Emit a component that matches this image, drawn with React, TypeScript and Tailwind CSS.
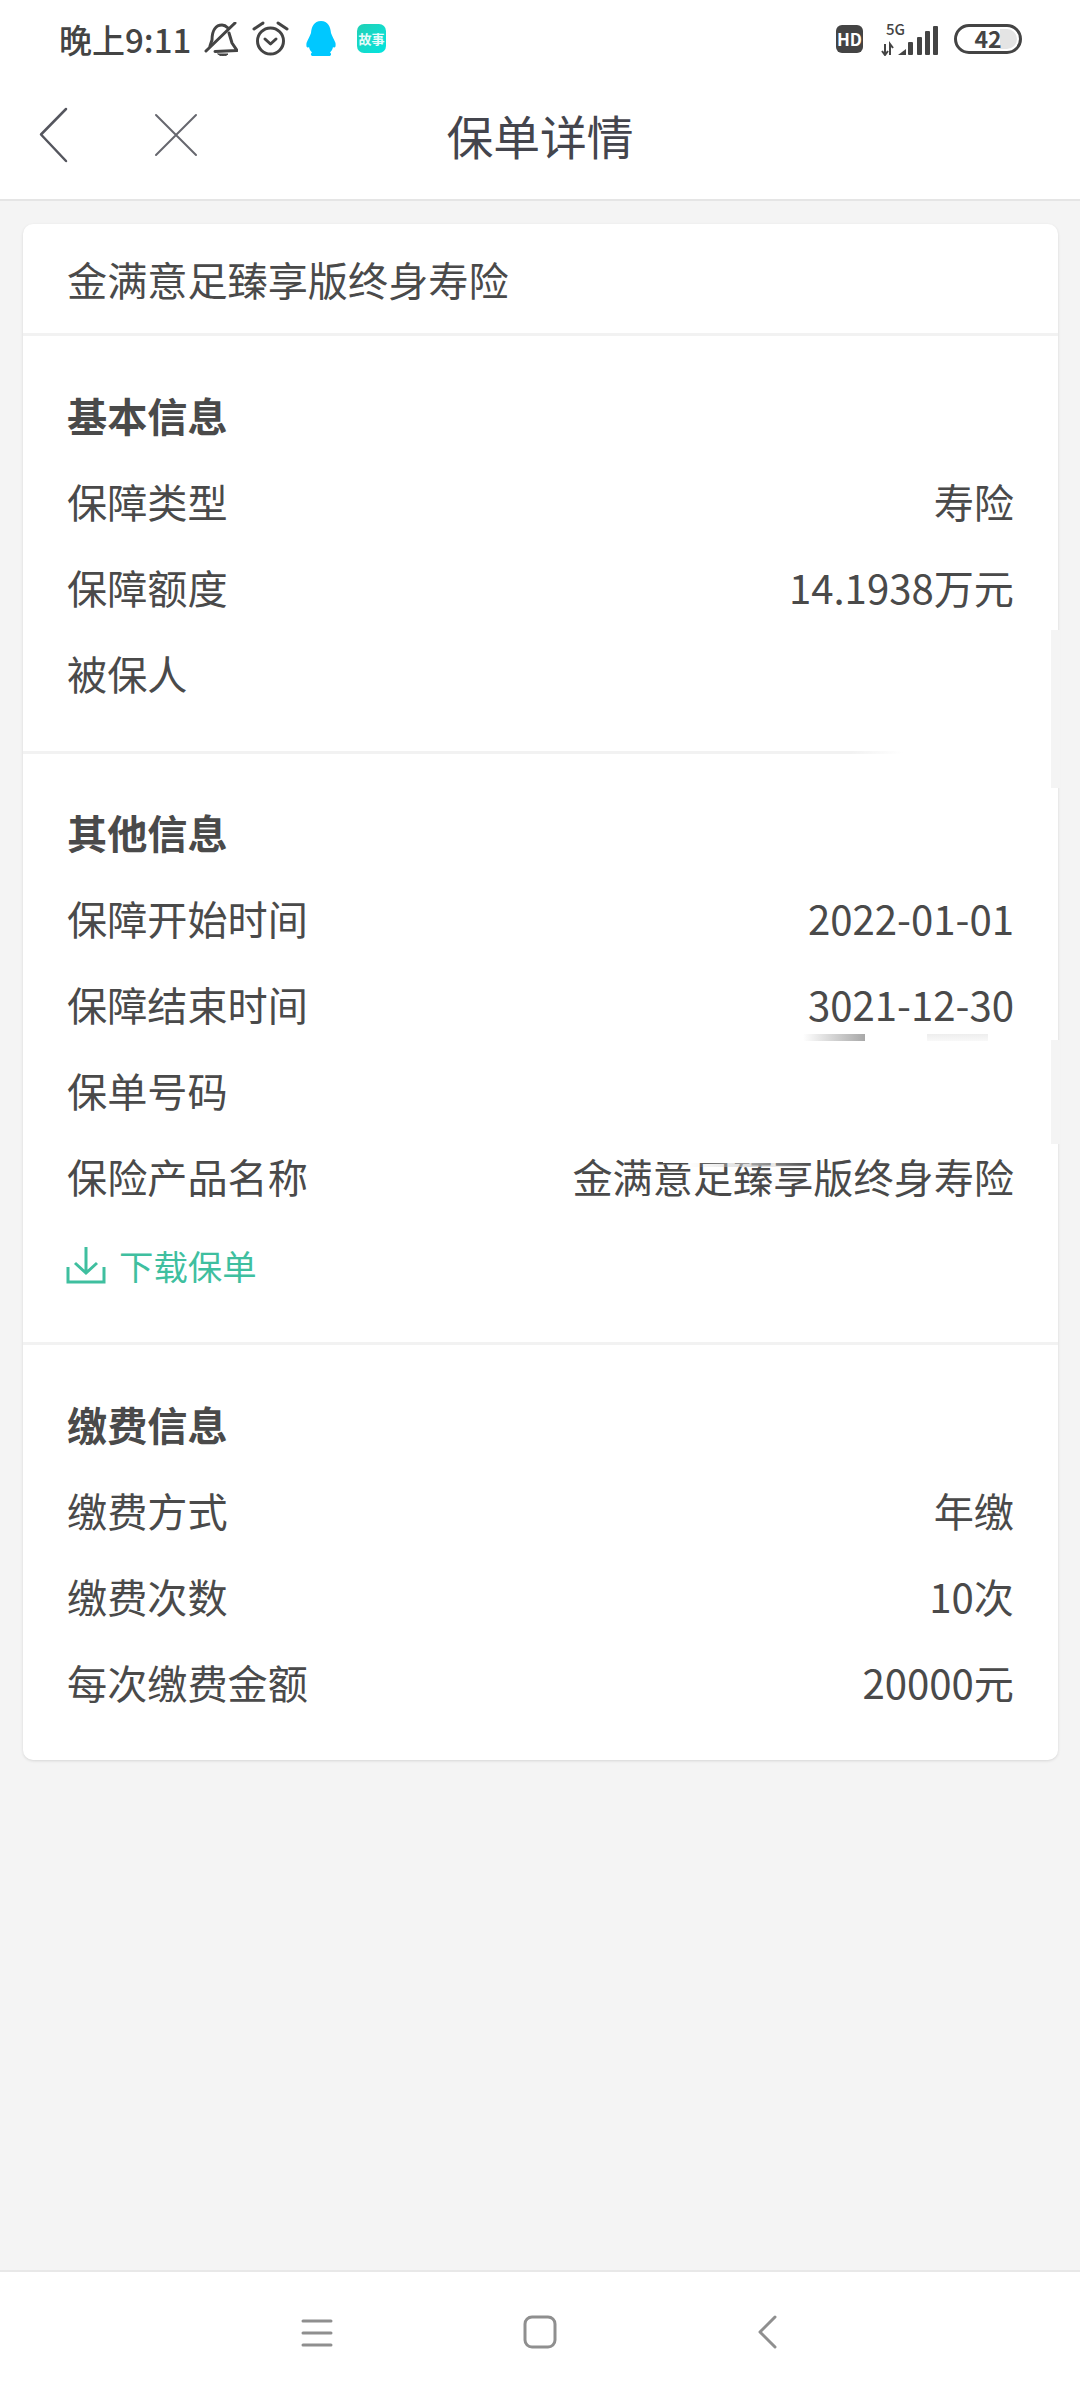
import type { ReactNode } from 'react';

const basicRows = [
  ['保障类型', '寿险'],
  ['保障额度', '14.1938万元'],
  ['被保人', ''],
];

const otherRows = [
  ['保障开始时间', '2022-01-01'],
  ['保障结束时间', '3021-12-30'],
  ['保单号码', ''],
  ['保险产品名称', '金满意足臻享版终身寿险'],
];

const payRows = [
  ['缴费方式', '年缴'],
  ['缴费次数', '10次'],
  ['每次缴费金额', '20000元'],
];

function Row({ label, value }: { label: string; value: string }) {
  return (
    <div className="flex h-[86px] items-center justify-between">
      <span>{label}</span>
      <span>{value}</span>
    </div>
  );
}

function Section({ title, rows, className, children }: { title: string; rows: string[][]; className: string; children?: ReactNode }) {
  return (
    <section className={`px-[44px] ${className}`}>
      <h2 className="flex h-[86px] items-center font-bold">{title}</h2>
      {rows.map(([label, value]) => (
        <Row key={label} label={label} value={value} />
      ))}
      {children}
    </section>
  );
}

function StatusBar() {
  return (
    <div className="flex h-[72px] items-center justify-between pl-[59px] pr-[58px] pt-[5px] text-[#444444]">
      <div className="flex items-center">
        <span className="w-[145px] whitespace-nowrap text-[33px] font-medium leading-[40px]">晚上9:11</span>
        <svg width="34" height="34" viewBox="0 0 34 34" fill="none" stroke="#444" strokeWidth="3" strokeLinecap="round" strokeLinejoin="round">
          <path d="M6 24 L8 18 C8 8 12 3 18 3 C20 3 22 4 24 6" />
          <path d="M25 11 L28 21 L33 28.500 L11 29.500" />
          <path d="M2 29 L31 1" />
          <path d="M14 32 H24 C22 34.500 16 34.500 14 32 Z" fill="#444" strokeWidth="1" />
        </svg>
        <svg className="ml-[14px]" width="37" height="35" viewBox="0 0 37 35" fill="none" stroke="#444" strokeWidth="3" strokeLinecap="round" strokeLinejoin="round">
          <circle cx="18.500" cy="20" r="13" />
          <path d="M13 18 L18.500 23 L24 18" />
          <path d="M2 8 L11 2" />
          <path d="M26 2 L35 8" />
        </svg>
        <svg className="ml-[17px]" width="30" height="35" viewBox="0 0 30 35" fill="#00c8ff">
          <path d="M15 0 C22 0 24.500 6 25 12 C26 15 28 18 29.500 22 C30 26 29 27.500 27 26 C26.500 28.500 25.500 30 24 31.500 C26 33 25 35 23 35 H7 C5 35 4 33 6 31.500 C4.500 30 3.500 28.500 3 26 C1 27.500 0 26 0.500 22 C2 18 4 15 5 12 C5.500 6 8 0 15 0 Z" />
        </svg>
        <span className="ml-[21px] flex h-[29px] w-[29px] items-center justify-center whitespace-nowrap rounded-[7px] bg-gradient-to-br from-[#1fd0b4] to-[#00e4e0] text-[13px] font-bold leading-none text-white/90">故事</span>
      </div>
      <div className="flex items-center">
        <span className="flex h-[28px] w-[27px] items-center justify-center rounded-[6px] bg-[#444444] text-[17px] font-bold leading-none text-white">HD</span>
        <div className="relative ml-[18px] h-[34px] w-[57px]">
          <span className="absolute left-[5px] top-[-1px] text-[15px] font-medium leading-[16px]">5G</span>
          <svg className="absolute left-0 top-0" width="57" height="34" viewBox="0 0 57 34" fill="#444">
            <path d="M4 22 V33 M1 29 L4 33 L7 29 M9 33 V22 L12 26" fill="none" stroke="#444" strokeWidth="2" />
            <path d="M17 33 L25 27 V33 Z" />
            <rect x="27" y="20" width="5" height="13" rx="1" />
            <rect x="36" y="15" width="5" height="18" rx="1" />
            <rect x="44" y="9" width="5" height="24" rx="1" />
            <rect x="52" y="4" width="5" height="29" rx="1" />
          </svg>
        </div>
        <div className="relative ml-[16px] flex h-[30px] w-[68px] items-center justify-center rounded-full border-[3px] border-[#444444]">
          <span className="absolute bottom-[2px] right-[2px] top-[2px] w-[17px] rounded-r-full bg-[#e4e4e4]" />
          <span className="relative text-[23px] font-bold leading-none">42</span>
        </div>
      </div>
    </div>
  );
}

function Header() {
  return (
    <header className="relative flex h-[129px] items-center justify-center border-b-2 border-[#e5e5e5]">
      <svg className="absolute left-[38px] top-[34px]" width="32" height="58" viewBox="0 0 32 58" fill="none" stroke="#55565e" strokeWidth="2.500" strokeLinecap="round" strokeLinejoin="round">
        <path d="M28 3 L3 28.500 L28 55" />
      </svg>
      <svg className="absolute left-[154px] top-[41px]" width="44" height="44" viewBox="0 0 44 44" fill="none" stroke="#66676e" strokeWidth="2" strokeLinecap="round">
        <path d="M2 2 L42 42 M42 2 L2 42" />
      </svg>
      <h1 className="-mt-[2px] text-[46.800px] leading-[60px] text-[#44454d]">保单详情</h1>
    </header>
  );
}

function BottomNav() {
  return (
    <nav className="relative flex h-[130px] items-center border-t-2 border-[#e8e8e8] bg-white">
      <svg className="absolute left-[300px] top-[46px]" width="34" height="30" viewBox="0 0 34 30" fill="none" stroke="#8f8f8f" strokeWidth="3" strokeLinecap="round">
        <path d="M3 3 H31 M3 15 H31 M3 27 H31" />
      </svg>
      <svg className="absolute left-[523px] top-[43px]" width="34" height="34" viewBox="0 0 34 34" fill="none" stroke="#8f8f8f" strokeWidth="3">
        <rect x="2" y="2" width="30" height="30" rx="7" />
      </svg>
      <svg className="absolute left-[756px] top-[43px]" width="22" height="34" viewBox="0 0 22 34" fill="none" stroke="#8f8f8f" strokeWidth="3" strokeLinecap="round" strokeLinejoin="round">
        <path d="M19 2 L4 17 L19 32" />
      </svg>
    </nav>
  );
}

export default function App() {
  return (
    <div className="flex h-[2400px] w-[1080px] flex-col bg-[#f4f4f4] font-['Noto_Sans_CJK_SC','Noto_Sans',sans-serif]">
      <div className="bg-white">
        <StatusBar />
        <Header />
      </div>

      <main className="flex-1 pl-[23px] pr-[22px] pt-[23px]">
        <div className="relative rounded-[10px] bg-white text-[40.150px] leading-[40px] text-[#4a4a4a] shadow-[0_1px_3px_rgba(0,0,0,0.12)]">
          <div className="h-[109px] px-[44px] pt-[35px]">金满意足臻享版终身寿险</div>
          <div className="h-[3px] bg-[#f2f2f2]" />
          <Section title="基本信息" rows={basicRows} className="pb-[35px] pt-[36px]" />
          <div className="h-[3px] bg-[linear-gradient(to_right,#f2f2f2_80%,#ffffff_85%)]" />
          <Section title="其他信息" rows={otherRows} className="h-[588px] pt-[35px]">
            <div className="flex h-[92px] items-center gap-[13px] text-[34.400px] text-[#3fbf9f]">
              <svg className="-ml-[1px]" width="40" height="38" viewBox="0 0 40 38" fill="none" stroke="#3fbf9f" strokeWidth="3">
                <path d="M20 1 V27 M9 17 L20 27 L31 17" />
                <path d="M2 21 V36 H38 V21" />
              </svg>
              <span>下载保单</span>
            </div>
          </Section>
          <div className="h-[3px] bg-[#f2f2f2]" />
          <Section title="缴费信息" rows={payRows} className="pb-[35px] pt-[36px]" />

          {/* covered-up patches in the screenshot */}
          <div className="absolute left-[1028px] top-[406px] h-[158px] w-[9px] bg-[#f4f4f4]" />
          <div className="absolute left-[1028px] top-[816px] h-[104px] w-[9px] bg-[#f4f4f4]" />
          <div className="absolute left-[780px] top-[810px] h-[7px] w-[62px] bg-gradient-to-r from-white to-[#a8a8a8]" />
          <div className="absolute left-[904px] top-[810px] h-[7px] w-[61px] bg-gradient-to-b from-[#eeeeee] to-[#f8f8f8]" />
          <div className="absolute left-[40px] top-[973px] h-[6px] w-[280px] bg-white" />
          <div className="absolute left-[640px] top-[926px] h-[13px] w-[150px] bg-white" />
          <div className="absolute left-[665px] top-[939px] h-[4px] w-[125px] bg-gradient-to-r from-white/0 via-[#cccccc]/70 to-white/0" />
        </div>
      </main>

      <BottomNav />
    </div>
  );
}
